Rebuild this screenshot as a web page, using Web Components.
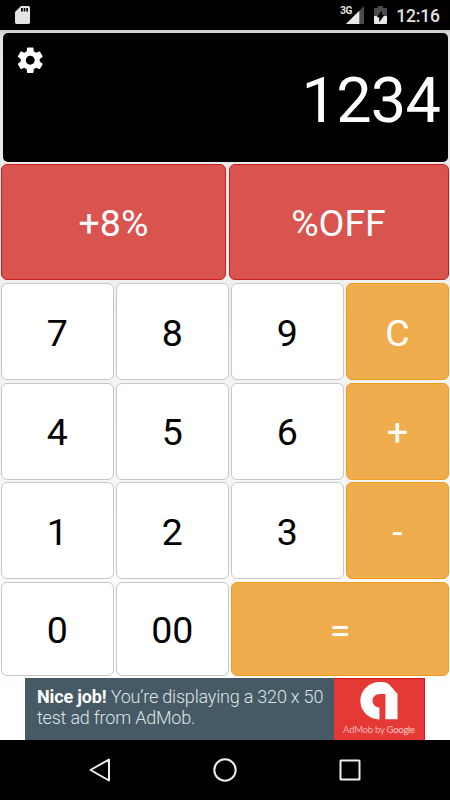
<!DOCTYPE html>
<html lang="en">
<head>
<meta charset="utf-8">
<meta name="viewport" content="width=device-width, initial-scale=1">
<title>Calculator</title>
<style>
	html, body {
		margin: 0;
		height: 100%;
	}
	body {
		font-family: Roboto, "Liberation Sans", sans-serif;
		background: #fff;
		overflow: hidden;
	}
</style>
</head>
<body>
<calc-app></calc-app>

<script>
(function() {
	const define = (name, html) => {
		const template = document.createElement('template');
		template.innerHTML = html;
		window.customElements.define(name, class extends HTMLElement {
			constructor() {
				super();
				this.attachShadow({ mode: 'open' });
				this.shadowRoot.appendChild(template.content.cloneNode(true));
			}
		});
	};

	define('status-bar', `
	<style>
	:host {
		display: flex;
		box-sizing: border-box;
		align-items: center;
		height: 30px;
		padding: 0 10.5px 0 15px;
		background: #000;
		color: #e2e2e2;
		font-size: 17.5px;
		font-weight: 500;
	}
	svg {
		display: block;
	}
	.space {
		flex: 1;
	}
	.net {
		align-self: flex-start;
		margin: 5px -6px 0 0;
		font-size: 10px;
		line-height: 11px;
		font-weight: 700;
		letter-spacing: -0.5px;
		z-index: 1;
	}
	.battery {
		margin: 0 9.5px 0 10px;
	}
	.clock {
		letter-spacing: -0.2px;
		margin-right: -0.2px;
		padding-top: 1px;
	}
	</style>
	<svg width="15" height="18" viewBox="0 0 15 18">
		<path fill="#e4e4e4" d="M6 0h7.3Q15 0 15 1.7v14.6q0 1.7-1.7 1.7H1.7Q0 18 0 16.3V6z"/>
		<path fill="#000" d="M6 2h1.8v3.6H6zM8.7 2h1.7v3.6H8.7zM11.3 2H13v3.6h-1.7z"/>
	</svg>
	<span class="space"></span>
	<span class="net">3G</span>
	<svg width="18" height="18" viewBox="0 0 18 18">
		<path fill="#4b4b4b" d="M18 0v18H0z"/>
		<path fill="#e8e8e8" d="M13.3 4.7V18H0z"/>
	</svg>
	<svg class="battery" width="13" height="18" viewBox="0 0 13 18">
		<path fill="#4b4b4b" d="M1 2h2.8V0h5.2v2H12q1 0 1 1v7H0V3q0-1 1-1z"/>
		<path fill="#e8e8e8" d="M0 10h13v7q0 1-1 1H1q-1 0-1-1z"/>
		<path fill="#000" d="M8 4.5v4.6h2.5L5.2 16.2v-5H2.7z"/>
	</svg>
	<span class="clock"><slot></slot></span>
	`);

	define('calc-display', `
	<style>
	:host {
		display: flex;
		box-sizing: border-box;
		height: 129px;
		margin: 0 1.5px;
		padding: 0 7.5px 0 12px;
		border-radius: 5px;
		background: #000;
		color: #fff;
		justify-content: space-between;
		align-items: flex-start;
	}
	svg {
		display: block;
		margin-top: 12px;
	}
	.value {
		font-size: 63px;
		line-height: 74px;
		margin-top: 31px;
		letter-spacing: -0.8px;
	}
	</style>
	<svg width="30.5" height="30.5" viewBox="0 0 24 24" fill="#fff">
		<path d="M19.430 12.980c.04-.32.07-.64.07-.98s-.03-.66-.07-.98l2.110-1.650c.19-.15.24-.42.12-.64l-2-3.460c-.12-.22-.39-.3-.61-.22l-2.490 1c-.52-.4-1.080-.73-1.690-.98l-.38-2.650C14.460 2.180 14.250 2 14 2h-4c-.25 0-.46.18-.49.42l-.38 2.650c-.61.25-1.170.59-1.690.98l-2.490-1c-.23-.09-.49 0-.61.22l-2 3.460c-.13.22-.07.49.12.64l2.110 1.650c-.04.32-.07.65-.07.98s.03.66.07.98l-2.110 1.650c-.19.15-.24.42-.12.64l2 3.460c.12.22.39.3.61.22l2.490-1c.52.4 1.080.73 1.690.98l.38 2.650c.03.24.24.42.49.42h4c.25 0 .46-.18.49-.42l.38-2.650c.61-.25 1.170-.59 1.690-.98l2.490 1c.23.09.49 0 .61-.22l2-3.460c.12-.22.07-.49-.12-.64l-2.110-1.650zM12 15.500c-1.930 0-3.500-1.570-3.500-3.500s1.570-3.500 3.500-3.500 3.500 1.570 3.500 3.500-1.570 3.500-3.500 3.500z"/>
	</svg>
	<span class="value"><slot></slot></span>
	`);

	define('calc-key', `
	<style>
	:host {
		display: flex;
		box-sizing: border-box;
		align-items: center;
		justify-content: center;
		min-width: 0;
		padding-top: 2.5px;
		border: 1px solid #c8c8c8;
		border-radius: 6px;
		background: #fff;
		color: #000;
		font-size: 37.5px;
		line-height: 44px;
	}
	:host([kind="rate"]) {
		background: #d9534f;
		border-color: #c9201f;
		color: #fff;
	}
	:host([kind="op"]) {
		background: #f0ad4e;
		border-color: #ee9c1c;
		color: #fff;
	}
	:host([wide]) {
		grid-column: span 2;
	}
	</style>
	<slot></slot>
	`);

	define('ad-banner', `
	<style>
	:host {
		display: flex;
		width: 400px;
		height: 62px;
		align-self: center;
		background: #455a64;
		color: #dfe4e6;
	}
	.text {
		flex: 1;
		padding: 9px 0 0 12px;
		font-size: 18px;
		line-height: 20.5px;
		font-weight: 300;
		letter-spacing: -0.2px;
		white-space: nowrap;
	}
	::slotted(b) {
		color: #fff;
		font-weight: 700;
		letter-spacing: -0.15px;
	}
	.brand {
		display: flex;
		flex-direction: column;
		align-items: center;
		box-sizing: border-box;
		width: 91px;
		padding-top: 3px;
		background: #e53935;
		border: 1px solid #e01515;
		border-width: 1px 1px 0 0;
		color: #f7b0ae;
		font-family: Lato, sans-serif;
		font-size: 9.5px;
		line-height: 12px;
		letter-spacing: -0.25px;
		white-space: nowrap;
	}
	.brand svg {
		display: block;
		margin-bottom: 4px;
	}
	.brand span span {
		-webkit-text-stroke: 0.25px currentColor;
	}
	</style>
	<div class="text"><slot></slot></div>
	<div class="brand">
		<svg width="37.5" height="37.5" viewBox="0 0 112 112">
			<path fill="#fff" d="M58 112A57 56 0 0 1 58 0L72 1Q82 2 88 8L112 36V111H76V36H58A21 20 0 0 0 58 76Z"/>
			<path fill="#e4e4e4" d="M76 36h36l-3-4z"/>
		</svg>
		<span>AdMob by <span>Google</span></span>
	</div>
	`);

	define('nav-bar', `
	<style>
	:host {
		display: flex;
		height: 60px;
		align-items: center;
		justify-content: center;
		gap: 101px;
		background: #000;
	}
	svg {
		display: block;
		fill: none;
		stroke: #eee;
		stroke-width: 2;
		stroke-linejoin: round;
	}
	</style>
	<svg width="24" height="24" viewBox="0 0 24 24"><path d="M21 1.500v21L2.500 12z"/></svg>
	<svg width="24" height="24" viewBox="0 0 24 24"><circle cx="12" cy="12" r="10.7"/></svg>
	<svg width="24" height="24" viewBox="0 0 24 24"><rect x="2.500" y="2.500" width="19" height="19" rx="0.5"/></svg>
	`);

	define('calc-app', `
	<style>
	:host {
		display: flex;
		flex-direction: column;
		width: 450px;
		height: 800px;
	}
	main {
		display: flex;
		flex-direction: column;
		box-sizing: border-box;
		height: 710px;
		padding: 2.5px 1px 0 1px;
		background: linear-gradient(#ccc 0, #dadada 4px, #e6e6e6 10px, #eaeaea 130px, #f0f0f0 260px, #f7f7f7 480px, #fff 670px);
	}
	.rates, .keys {
		display: grid;
		gap: 2.5px;
	}
	.rates {
		grid-template-columns: 225px 220px;
		height: 116px;
		margin: 2.5px 0 3px;
	}
	.keys {
		grid-template-columns: 112.5px 112.5px 112.5px 103px;
		grid-template-rows: 97px 97px 97px 94.5px;
		margin-bottom: 2px;
	}
	</style>
	<status-bar>12:16</status-bar>
	<main>
		<calc-display>1234</calc-display>
		<div class="rates">
			<calc-key kind="rate">+8%</calc-key>
			<calc-key kind="rate">%OFF</calc-key>
		</div>
		<div class="keys">
			<calc-key>7</calc-key>
			<calc-key>8</calc-key>
			<calc-key>9</calc-key>
			<calc-key kind="op">C</calc-key>
			<calc-key>4</calc-key>
			<calc-key>5</calc-key>
			<calc-key>6</calc-key>
			<calc-key kind="op">+</calc-key>
			<calc-key>1</calc-key>
			<calc-key>2</calc-key>
			<calc-key>3</calc-key>
			<calc-key kind="op">-</calc-key>
			<calc-key>0</calc-key>
			<calc-key>00</calc-key>
			<calc-key kind="op" wide>=</calc-key>
		</div>
		<ad-banner><b>Nice job!</b> You’re displaying a 320 x 50<br>test ad from AdMob.</ad-banner>
	</main>
	<nav-bar></nav-bar>
	`);
})();
</script>
</body>
</html>
